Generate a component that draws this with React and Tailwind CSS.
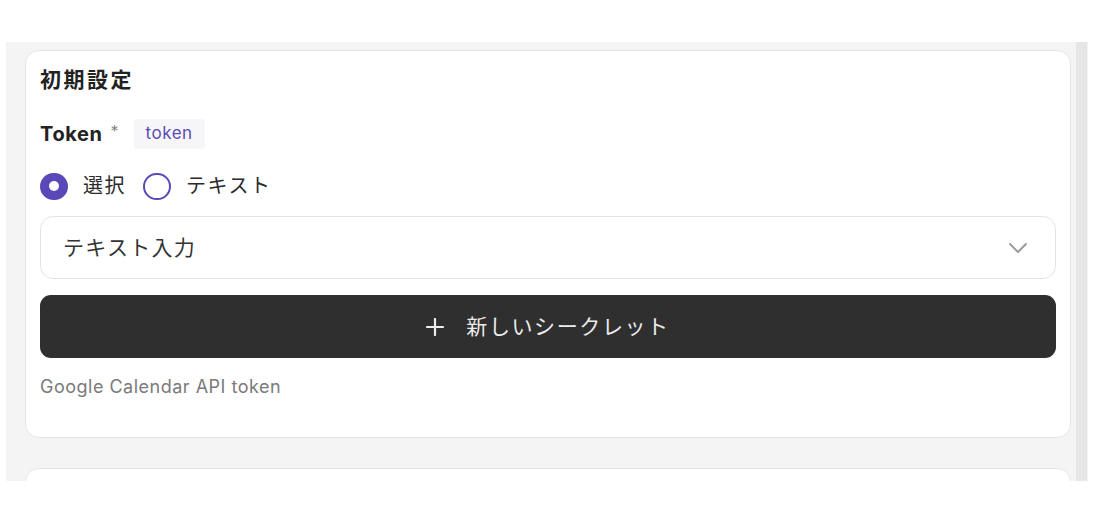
import React, { useState } from 'react';

const font = { fontFamily: '"Inter", "Noto Sans CJK JP", sans-serif' };

function Radio({ checked, label, onClick }) {
  return (
    <button type="button" onClick={onClick} className="flex items-center gap-[15px]">
      {checked ? (
        <span className="w-[28px] h-[27px] rounded-full bg-[#5b48b8] flex items-center justify-center">
          <span className="w-[10px] h-[10px] rounded-full bg-white" />
        </span>
      ) : (
        <span className="w-[28px] h-[27px] rounded-full border-[2px] border-[#5b48b8] bg-white" />
      )}
      <span className="text-[20px] leading-[26px] tracking-[1.5px] text-[#2b2b2b]">{label}</span>
    </button>
  );
}

export default function App() {
  const [mode, setMode] = useState('select');

  return (
    <div className="w-[1104px] h-[516px] bg-white pt-[42px] pl-[6px]" style={font}>
      <div className="w-[1082px] h-[439px] bg-[#f4f4f4] flex overflow-hidden">
        <div className="flex-1 pl-[19px] pr-[5px] pt-[8px] flex flex-col gap-[30px]">
          {/* 初期設定 card */}
          <div className="h-[388px] shrink-0 bg-white rounded-[14px] border border-[#e6e6e6] pt-[16px] px-[14px]">
            <h2 className="text-[21px] leading-[26px] font-bold tracking-[2.5px] text-[#222]">初期設定</h2>

            <div className="mt-[26px] flex items-center h-[30px]">
              <span className="text-[20px] font-bold tracking-[0.6px] text-[#222]">Token</span>
              <span className="ml-[8px] text-[16px] text-[#888] -mt-[6px]">*</span>
              <span className="ml-[15px] h-[30px] px-[12px] flex items-center bg-[#f6f6f8] rounded-[4px] text-[17px] tracking-[0.5px] text-[#5a4cb4]">
                token
              </span>
            </div>

            <div className="mt-[24px] flex items-center gap-[17px] h-[26px]">
              <Radio checked={mode === 'select'} label="選択" onClick={() => setMode('select')} />
              <Radio checked={mode === 'text'} label="テキスト" onClick={() => setMode('text')} />
            </div>

            <div className="mt-[17px] h-[63px] rounded-[13px] border border-[#e4e4e4] flex items-center justify-between pl-[22px] pr-[27px]">
              <span className="text-[21px] tracking-[1.3px] text-[#333]">テキスト入力</span>
              <svg width="20" height="12" viewBox="0 0 20 12" fill="none" stroke="#999" strokeWidth="1.9" strokeLinecap="round" strokeLinejoin="round">
                <path d="M2 2l8 8 8-8" />
              </svg>
            </div>

            <button type="button" className="mt-[16px] w-full h-[63px] rounded-[11px] bg-[#2f2f2f] flex items-center justify-center gap-[22px] text-[#ececec]">
              <svg width="18" height="18" viewBox="0 0 18 18" fill="none" stroke="#ececec" strokeWidth="2.2" strokeLinecap="round">
                <path d="M9 1v16M1 9h16" />
              </svg>
              <span className="text-[21px] tracking-[1.6px]">新しいシークレット</span>
            </button>

            <p className="mt-[15px] text-[18px] tracking-[0.5px] text-[#7a7a7a]">Google Calendar API token</p>
          </div>

          {/* next card (cut off) */}
          <div className="h-[120px] shrink-0 bg-white rounded-[14px] border border-[#e6e6e6]" />
        </div>
        <div className="w-[11px] bg-[#e6e6e6]" />
        <div className="w-[1px] bg-[#f4f4f4]" />
      </div>
    </div>
  );
}
